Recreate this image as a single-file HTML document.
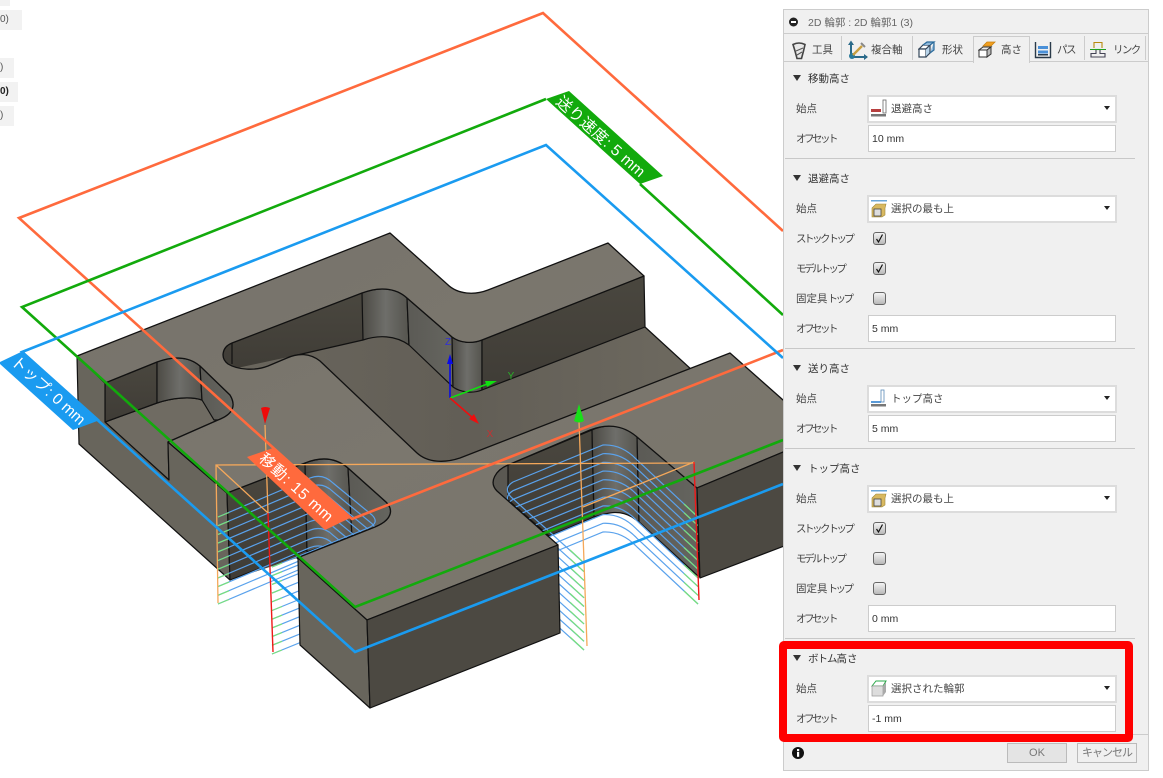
<!DOCTYPE html>
<html><head><meta charset="utf-8"><style>
html,body{margin:0;padding:0;background:#fff}
body{width:1163px;height:778px;overflow:hidden;position:relative;font-family:"Liberation Sans","Noto Sans CJK JP",sans-serif;font-size:10.5px;color:#444}
.a{position:absolute;white-space:nowrap;line-height:14px;margin-top:1px}
.k{letter-spacing:-2.5px}
.h{color:#333;left:808px}
.l{left:796px}
.sel{position:absolute;left:867px;width:246px;height:24px;background:#fff;border:2px solid #dcdcdc}
.inp{position:absolute;left:868px;width:246px;height:25px;background:#fff;border:1px solid #ccc;line-height:27px;text-indent:3px;color:#333}
.sel span{position:absolute;left:22px;top:5px;line-height:14px;color:#444}
.sel i{position:absolute;right:5px;top:9px;width:0;height:0;border-left:3px solid transparent;border-right:3px solid transparent;border-top:4px solid #222}
.sel svg{position:absolute;left:2px;top:2px}
.tri{position:absolute;left:793px;width:0;height:0;border-left:4.5px solid transparent;border-right:4.5px solid transparent;border-top:6px solid #333}
.div{position:absolute;left:785px;width:350px;height:1px;background:#c8c8c8}
.cb{position:absolute;left:873px;width:11px;height:11px;border:1px solid #666;border-radius:3px;background:linear-gradient(#f4f4f4,#b8b8b8)}
.cb svg{position:absolute;left:0;top:0}
.frag{position:absolute;left:0;background:#f2f2f2;color:#555;font-size:10px;line-height:20px}
.tab{position:absolute;top:36px;height:26px}
.sep{position:absolute;top:36px;width:1px;height:24px;background:#ccc}
.btn{position:absolute;top:743px;width:58px;height:18px;border:1px solid #bbb;background:#e4e4e4;color:#777;text-align:center;line-height:18px;font-size:11px}
</style></head><body>
<div style="position:absolute;left:0;top:0;width:10px;height:6px;background:#f2f2f2"></div>
<div class="frag" style="top:10px;width:22px;height:20px">0)</div>
<div class="frag" style="top:58px;width:14px;height:20px">)</div>
<div class="frag" style="top:82px;width:18px;height:20px;color:#222;font-weight:bold">0)</div>
<div class="frag" style="top:106px;width:14px;height:20px">)</div>

<svg width="1163" height="778" viewBox="0 0 1163 778" style="position:absolute;left:0;top:0">
<defs>
<linearGradient id="dk" x1="0" y1="0" x2="0" y2="1"><stop offset="0" stop-color="#4a473f"/><stop offset="1" stop-color="#3f3c36"/></linearGradient>
<linearGradient id="rnd" x1="0" y1="0" x2="1" y2="0"><stop offset="0" stop-color="#4c4a44"/><stop offset=".5" stop-color="#6e6e6a"/><stop offset="1" stop-color="#55544e"/></linearGradient>
<linearGradient id="side" x1="0" y1="0" x2="1" y2="0"><stop offset="0" stop-color="#5b5a55"/><stop offset="1" stop-color="#65655f"/></linearGradient>
<linearGradient id="tf" x1="0" y1="0" x2="1" y2="1"><stop offset="0" stop-color="#76726a"/><stop offset=".5" stop-color="#7b776e"/><stop offset="1" stop-color="#78746a"/></linearGradient>
<linearGradient id="fl" x1="0" y1="0" x2="1" y2="0"><stop offset="0" stop-color="#6a665d"/><stop offset=".5" stop-color="#625e56"/><stop offset="1" stop-color="#6e6a60"/></linearGradient>
<path id="top" d="M77,356 L390,233 L447,284 C458,295 475,295 488,290 L608,243 L644,276 L482,340 C472,344 460,343 452,337 L407,298 C395,287 378,287 362,293 L232,343 C222,347 220,358 228,364 C238,370 255,371 268,366 L287,358 C298,353 310,353 320,361 L417,453 C428,463 445,463 460,458 L730,353 L800,415 L800,445 L697,488 L637,437 C622,424 605,424 590,430 L508,465 C496,470 488,482 497,491 L558,545 L367,620 L297,558 L375,527 C392,520 394,510 386,502 L348,468 C335,457 320,457 305,463 L227,493 L168,442 L218,420 C234,414 236,405 230,395 L200,366 C187,355 170,357 157,362 L105,383 Z" fill="url(#tf)" stroke="#111" stroke-width="1.3" stroke-linejoin="round"/>
<g id="p1" fill="none" stroke-width="1.2">
<path d="M218,517 L310,478 Q323,473 333,483 L372,515 Q380,523 368,528 L272,567" stroke="#5aa2ec"/>
<path d="M218,517 L229,512.5 M272,567 L282,563" stroke="#78e07c"/>
</g>
<g id="p2" fill="none" stroke-width="1.2">
<path d="M698,517 L637,460 Q622,444 603,445 L513,482 Q503,488 511,497 L584,563" stroke="#5aa2ec"/>
<path d="M698,517 L684,504 M570,550 L584,563" stroke="#78e07c"/>
</g>
</defs>
<g stroke="#111" stroke-width="1.2" stroke-linejoin="round">
<!-- main channel floor -->
<path d="M225,372 L363,300 L410,300 L455,340 L482,345 L645,327 L712,388 L460,470 L417,464 L315,362 Z" fill="url(#fl)" stroke="none"/>
<path d="M218,355 L232,340 L362,293 L363,340 L293,356 L228,370 Z" fill="url(#dk)" stroke="none"/>
<path d="M232,343 L232,364 M363,340 L293,356" fill="none"/>
<path d="M362,293 C378,287 395,287 407,298 L409,345 C395,335 378,335 363,340 Z" fill="url(#rnd)"/>
<path d="M407,298 L452,337 L453,387 L409,345 Z" fill="url(#side)"/>
<path d="M452,337 C460,343 472,344 482,340 L482,390 C472,394 460,392 453,387 Z" fill="url(#rnd)"/>
<path d="M482,340 L644,276 L645,327 L482,390 Z" fill="url(#dk)"/>
<path d="M645,327 L705,382" fill="none"/>
<!-- pocket 1 -->
<path d="M105,422 L157,403 C172,398 190,396 202,400 L218,420 L168,442 L169,480 Z" fill="#6f6b62"/>
<path d="M105,383 L157,362 L157,403 L105,422 Z" fill="url(#dk)"/>
<path d="M157,362 C170,357 187,355 200,366 L202,400 C190,396 172,398 157,403 Z" fill="url(#rnd)"/>
<path d="M200,366 L230,395 C236,405 234,414 218,420 L214,420 L202,400 Z" fill="url(#side)"/>
<!-- front-left face -->
<path d="M77,356 L105,383 L105,422 L169,480 L168,442 L227,493 L230,580 L79,444 Z" fill="#68655c"/>
<!-- pocket 2 -->
<path d="M227,493 L305,463 C320,457 335,457 348,468 L386,502 C394,510 392,520 375,527 L297,558 L230,580 Z" fill="#46433c" stroke="none"/>
<path d="M227,493 L305,463 L307,550 L230,580 Z" fill="url(#dk)"/>
<path d="M305,463 C320,457 335,457 348,468 L352,536 L307,552 Z" fill="url(#rnd)"/>
<path d="M348,468 L386,502 C394,510 392,520 375,527 L352,536 Z" fill="url(#side)"/>
<!-- pocket 3 -->
<path d="M485,470 L508,465 L508,505 L490,495 Z" fill="#5a5852" stroke="none"/>
<path d="M508,465 L592,430 L594,517 L549,536 L508,500 Z" fill="url(#dk)"/>
<path d="M592,430 C605,424 622,424 637,435 L639,522 L632,517 C620,510 610,512 594,517 Z" fill="url(#rnd)"/>
<path d="M637,435 L697,488 L699,577 L639,522 Z" fill="url(#side)"/>
</g>
<!-- tool paths -->
<use href="#p1"/><use href="#p1" y="8.7"/><use href="#p1" y="17.4"/><use href="#p1" y="26.1"/><use href="#p1" y="34.8"/><use href="#p1" y="43.5"/><use href="#p1" y="52.2"/><use href="#p1" y="60.9"/><use href="#p1" y="69.6"/><use href="#p1" y="78.3"/><use href="#p1" y="87"/>
<use href="#p2"/><use href="#p2" y="8.7"/><use href="#p2" y="17.4"/><use href="#p2" y="26.1"/><use href="#p2" y="34.8"/><use href="#p2" y="43.5"/><use href="#p2" y="52.2"/><use href="#p2" y="60.9"/><use href="#p2" y="69.6"/><use href="#p2" y="78.3"/><use href="#p2" y="87"/>
<!-- occluders -->
<use href="#top"/>
<g stroke="#111" stroke-width="1.2" stroke-linejoin="round">
<path d="M298,558 L300,645 L370,708 L367,620 Z" fill="#68655c"/>
<path d="M367,620 L370,708 L560,633 L558,545 Z" fill="#4c4942"/>
<path d="M697,488 L700,578 L800,540 L800,445 Z" fill="#4c4942"/>
</g>
<!-- orange frame -->
<g fill="none" stroke="#f5a85a" stroke-width="1.3">
<path d="M695,463 L216,465 L218,603 M216,465 L268,513 L265,425"/>
<path d="M694,462 L583,507 M579,421 L587,646"/>
</g>
<path d="M268,513 L273,652 M694,462 L699,600" fill="none" stroke="#f01818" stroke-width="1.4"/>
<path d="M261,408 Q265,406 270,408 L265,424 Z" fill="#ee0a0a"/>
<path d="M579,404 L584,421 Q579,424 574,421 Z" fill="#18e018"/>
<!-- axis triad -->
<path d="M450,398 L450,362" stroke="#0a0ae8" stroke-width="1.6"/><path d="M450,354 L453,364 H447 Z" fill="#0a0ae8"/>
<path d="M450,398 L490,383" stroke="#10e010" stroke-width="1.6"/><path d="M497,381 L487,387 L485,381 Z" fill="#10e010"/>
<path d="M450,398 L473,418" stroke="#ee0e0e" stroke-width="1.6"/><path d="M479,424 L469,419 L474,414 Z" fill="#ee0e0e"/>
<g font-family="Liberation Sans" font-size="10" text-anchor="middle">
<text x="448" y="345" fill="#3030d8">Z</text>
<text x="511" y="379" fill="#28b028">Y</text>
<text x="490" y="437" fill="#c83030">X</text>
</g>
<!-- planes -->
<g fill="none" stroke-width="2.6" stroke-linejoin="miter">
<path d="M783,231 L543,13 L19,218 L352,519 L783,350" stroke="#ff6a3d"/>
<path d="M640,184 L783,315 M546,99 L22,307 L355,607 L783,440" stroke="#12aa0c"/>
<path d="M783,358 L546,145 L22,352 L355,652 L783,484" stroke="#1a9bf0"/>
</g>
<!-- labels -->
<path d="M546,99 L569,91 L663,176 L640,184 Z" fill="#12aa0c"/>
<path d="M0,362 L23,351 L100,420 L73,430 L0,364 Z" fill="#1a9bf0"/>
<path d="M247,457 L273,448 L350,518 L325,530 Z" fill="#ff6a3d"/>
<g fill="#fff" font-family="'Liberation Sans','Noto Sans CJK JP',sans-serif" font-size="15.5">
<text transform="translate(555,103) rotate(41.5)" letter-spacing=".4">送り速度: 5 mm</text>
<text transform="translate(10,363) rotate(42)">トップ: 0 mm</text>
<text transform="translate(258,460) rotate(42)" letter-spacing=".8">移動: 15 mm</text>
</g>
</svg>

<!-- panel -->
<div style="position:absolute;left:783px;top:9px;width:364px;height:760px;background:#f0f0f0;border:1px solid #ccc"></div>
<div style="position:absolute;left:784px;top:33px;width:364px;height:1px;background:#ccc"></div>
<div style="position:absolute;left:784px;top:61px;width:364px;height:1px;background:#ccc"></div>
<svg width="14" height="14" style="position:absolute;left:787px;top:15px"><circle cx="6.5" cy="7" r="4.5" fill="#222"/><rect x="4" y="6" width="5" height="2" fill="#fff"/></svg>
<div class="a" style="left:808px;top:15px;color:#666;font-size:10.5px">2D 輪郭 : 2D 輪郭1 (3)</div>

<div class="sep" style="left:841px"></div><div class="sep" style="left:912px"></div><div class="sep" style="left:1084px"></div><div class="sep" style="left:1145px"></div>
<div class="tab" style="left:973px;width:55px;background:#f0f0f0;border:1px solid #ccc;border-bottom:none"></div>

<svg width="16" height="20" style="position:absolute;left:791px;top:41px"><path d="M2,3.500 Q8,0.500 14,3.500 L12.500,10 L10.500,17.500 H6 L4,10 Z" fill="#e8e8e8" stroke="#444" stroke-width="1.6"/><path d="M5,10 L12,7 M6,14 L11,11" stroke="#555" stroke-width="1.1"/></svg>
<div class="a" style="left:812px;top:42px">工具</div>
<svg width="22" height="22" style="position:absolute;left:847px;top:40px" fill="none"><path d="M4,3 V17 H20" stroke="#2a6a8a" stroke-width="2"/><path d="M4,0.500 L7,5 H1 Z M21,17 L17,14 V20 Z" fill="#2a6a8a"/><circle cx="5" cy="16" r="3" fill="#2a7a9a"/><path d="M6,15 L15,6" stroke="#c8a040" stroke-width="2.4"/><path d="M14,3 L18,7" stroke="#888" stroke-width="2"/></svg>
<div class="a" style="left:871px;top:42px">複合軸</div>
<svg width="18" height="18" style="position:absolute;left:918px;top:41px" fill="none" stroke="#34465a" stroke-width="1.2"><path d="M1,8 L5,4 H12 L8,8 Z" fill="#fff"/><path d="M1,8 H8 V16 H1 Z" fill="#fff"/><path d="M8,8 L12,4 V12 L8,16" fill="#b8d4ea"/><path d="M5,4 L9,1 H16 L12,4 M16,1 V9 L12,12" fill="#8fb9dc" stroke="#2a6a9a"/></svg>
<div class="a" style="left:942px;top:42px">形状</div>
<svg width="18" height="18" style="position:absolute;left:978px;top:41px"><path d="M5,5 L9,1 H17 L13,5 Z" fill="#f2a020" stroke="#c88010" stroke-width=".8"/><path d="M1,9 L5,6 H13 L9,9 Z" fill="#eee" stroke="#333"/><path d="M1,9 H9 V16 H1 Z" fill="#fff" stroke="#333"/><path d="M9,9 L13,6 V13 L9,16 Z" fill="#bbb" stroke="#333"/></svg>
<div class="a" style="left:1001px;top:42px">高さ</div>
<svg width="18" height="18" style="position:absolute;left:1034px;top:41px" fill="none"><path d="M1.5,1 V16.5 H16.5 V1" stroke="#2a3a4a" stroke-width="1.4"/><rect x="4" y="5" width="10" height="3" fill="#4a90d8"/><rect x="4" y="9.500" width="10" height="3" fill="#4a90d8"/><rect x="4" y="13" width="10" height="1.500" fill="#2a3a4a"/></svg>
<div class="a k" style="left:1057px;top:42px;letter-spacing:-1.5px">パス</div>
<svg width="18" height="18" style="position:absolute;left:1090px;top:41px" fill="none" stroke-width="1.1"><path d="M4,7 V1.500 H12 V7" stroke="#b88a10"/><path d="M0,8.500 H5 M11,8.500 H16" stroke="#20a020"/><path d="M5,8.500 H11" stroke="#20a020"/><path d="M6,9 V12.500 H1 V16 H15 V12.500 H10 V9" stroke="#445"/></svg>
<div class="a k" style="left:1113px;top:42px;letter-spacing:-1.6px">リンク</div>

<!-- section 1 -->
<div class="tri" style="top:75px"></div><div class="a h" style="top:71px">移動高さ</div>
<div class="a l" style="top:101px">始点</div>
<div class="sel" style="top:95px"><svg width="17" height="19"><rect x="12" y="1" width="3" height="13" fill="#fff" stroke="#666" stroke-width=".8"/><rect x="0" y="10" width="10" height="3" fill="#b84040"/><rect x="0" y="15" width="15" height="2.500" fill="#777"/></svg><span>退避高さ</span><i></i></div>
<div class="a l k" style="top:131px">オフセット</div>
<div class="inp" style="top:125px">10 mm</div>
<div class="div" style="top:158px"></div>

<!-- section 2 -->
<div class="tri" style="top:175px"></div><div class="a h" style="top:171px">退避高さ</div>
<div class="a l" style="top:201px">始点</div>
<div class="sel" style="top:195px"><svg width="17" height="19"><rect x="0" y="1" width="16" height="1.500" fill="#6aa6d8"/><path d="M1,9 L5,5 H15 L14,9 V16 L11,18 H1 Z" fill="#d8b860" stroke="#a08838" stroke-width=".6"/><rect x="3" y="10" width="7" height="7" fill="#ddd" stroke="#444" stroke-width=".8"/></svg><span>選択の最も上</span><i></i></div>
<div class="a l k" style="top:231px">ストック トップ</div>
<div class="cb" style="top:232px"><svg width="11" height="11"><path d="M2.500,6 L4.500,9 L8.500,1.500" fill="none" stroke="#111" stroke-width="1.2"/></svg></div>
<div class="a l k" style="top:261px">モデル トップ</div>
<div class="cb" style="top:262px"><svg width="11" height="11"><path d="M2.500,6 L4.500,9 L8.500,1.500" fill="none" stroke="#111" stroke-width="1.2"/></svg></div>
<div class="a l" style="top:291px">固定具<span class="k">トップ</span></div>
<div class="cb" style="top:292px"></div>
<div class="a l k" style="top:321px">オフセット</div>
<div class="inp" style="top:315px">5 mm</div>
<div class="div" style="top:348px"></div>

<!-- section 3 -->
<div class="tri" style="top:365px"></div><div class="a h" style="top:361px">送り高さ</div>
<div class="a l" style="top:391px">始点</div>
<div class="sel" style="top:385px"><svg width="17" height="19"><rect x="10" y="1" width="3" height="12" fill="#fff" stroke="#5a8ab8" stroke-width=".8"/><rect x="0" y="12" width="10" height="2" fill="#5a9ad8"/><rect x="0" y="15" width="15" height="2.500" fill="#777"/></svg><span>トップ高さ</span><i></i></div>
<div class="a l k" style="top:421px">オフセット</div>
<div class="inp" style="top:415px">5 mm</div>
<div class="div" style="top:448px"></div>

<!-- section 4 -->
<div class="tri" style="top:465px"></div><div class="a h" style="top:461px">トップ高さ</div>
<div class="a l" style="top:491px">始点</div>
<div class="sel" style="top:485px"><svg width="17" height="19"><rect x="0" y="1" width="16" height="1.500" fill="#6aa6d8"/><path d="M1,9 L5,5 H15 L14,9 V16 L11,18 H1 Z" fill="#d8b860" stroke="#a08838" stroke-width=".6"/><rect x="3" y="10" width="7" height="7" fill="#ddd" stroke="#444" stroke-width=".8"/></svg><span>選択の最も上</span><i></i></div>
<div class="a l k" style="top:521px">ストック トップ</div>
<div class="cb" style="top:522px"><svg width="11" height="11"><path d="M2.500,6 L4.500,9 L8.500,1.500" fill="none" stroke="#111" stroke-width="1.2"/></svg></div>
<div class="a l k" style="top:551px">モデル トップ</div>
<div class="cb" style="top:552px"></div>
<div class="a l" style="top:581px">固定具<span class="k">トップ</span></div>
<div class="cb" style="top:582px"></div>
<div class="a l k" style="top:611px">オフセット</div>
<div class="inp" style="top:605px">0 mm</div>
<div class="div" style="top:638px"></div>

<!-- section 5 -->
<div class="tri" style="top:655px"></div><div class="a h" style="top:651px"><span style="letter-spacing:-1px">ボトム</span>高さ</div>
<div class="a l" style="top:681px">始点</div>
<div class="sel" style="top:675px"><svg width="17" height="19"><path d="M1,7 L5,2 H15 L12,7 Z" fill="#fff" stroke="#28a848" stroke-width="1"/><path d="M1,7 H12 V17 H1 Z" fill="#ddd" stroke="#999" stroke-width=".7"/><path d="M12,7 L15,3 V13 L12,17 Z" fill="#aaa"/></svg><span>選択された輪郭</span><i></i></div>
<div class="a l k" style="top:711px">オフセット</div>
<div class="inp" style="top:705px">-1 mm</div>

<div style="position:absolute;left:784px;top:734px;width:364px;height:1px;background:#ccc"></div>
<svg width="14" height="14" style="position:absolute;left:791px;top:746px"><circle cx="7" cy="7" r="6" fill="#111"/><rect x="6" y="5.800" width="2.200" height="5" fill="#fff"/><rect x="6" y="3" width="2.200" height="2" fill="#fff"/></svg>
<div class="btn" style="left:1007px">OK</div>
<div class="btn k" style="left:1077px;letter-spacing:-1px;background:#f0f0f0">キャンセル</div>

<div style="position:absolute;left:779px;top:641px;width:338px;height:85px;border:8px solid #ff0000;border-radius:5px"></div>
</body></html>
